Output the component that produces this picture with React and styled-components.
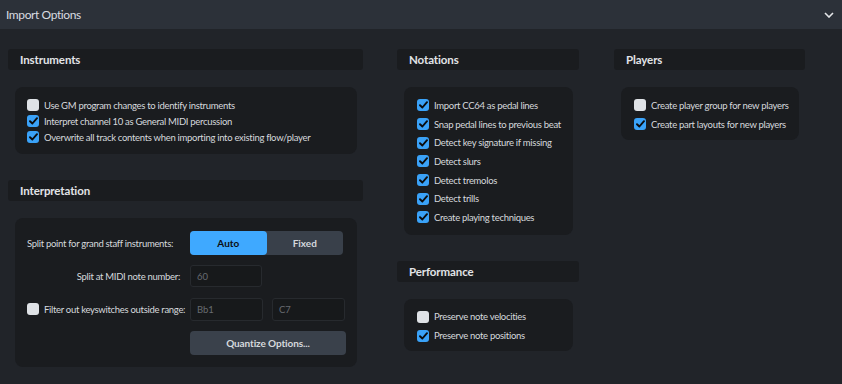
import React from "react";
import styled, { createGlobalStyle } from "styled-components";

const GlobalStyle = createGlobalStyle`
  body {
    margin: 0;
    background: #212429;
    font-family: Lato, "Open Sans", sans-serif;
    color: #d4d7db;
  }
`

const instruments = [
  { label: "Use GM program changes to identify instruments", checked: false },
  { label: "Interpret channel 10 as General MIDI percussion", checked: true },
  { label: "Overwrite all track contents when importing into existing flow/player", checked: true },
]

const notations = [
  "Import CC64 as pedal lines",
  "Snap pedal lines to previous beat",
  "Detect key signature if missing",
  "Detect slurs",
  "Detect tremolos",
  "Detect trills",
  "Create playing techniques",
].map(label => ({ label, checked: true }))

const performance = [
  { label: "Preserve note velocities", checked: false },
  { label: "Preserve note positions", checked: true },
]

const players = [
  { label: "Create player group for new players", checked: false },
  { label: "Create part layouts for new players", checked: true },
]

function Check({ checked }) {
  return (
    <Box checked={checked}>
      {checked && (
        <svg width="9" height="8" viewBox="0 0 9 8">
          <path d="M1 4.2 L3.4 6.5 L8 1.2" fill="none" stroke="#0b0c0e" strokeWidth="1.9" strokeLinecap="round" strokeLinejoin="round" />
        </svg>
      )}
    </Box>
  )
}

function CheckList({ items, rowHeight }) {
  return items.map((item, id) => (
    <CheckRow key={id} rowHeight={rowHeight}>
      <Check checked={item.checked} />
      <span>{item.label}</span>
    </CheckRow>
  ))
}

export default function App() {
  return (
    <>
      <GlobalStyle />
      <TitleBar>
        <span>Import Options</span>
        <svg width="10" height="6" viewBox="0 0 10 6">
          <path d="M1 1 L5 5 L9 1" fill="none" stroke="#e4e6e9" strokeWidth="1.6" />
        </svg>
      </TitleBar>
      <Content>
        <Column width={355}>
          <Section>
            <SectionHeader>Instruments</SectionHeader>
            <Panel padding="10px 12px 9px">
              <CheckList items={instruments} rowHeight={16} />
            </Panel>
          </Section>
          <Section>
            <SectionHeader>Interpretation</SectionHeader>
            <Panel padding="13px 11px 12px 12px">
              <FormGrid>
                <Label>Split point for grand staff instruments:</Label>
                <Segmented>
                  <Segment active>Auto</Segment>
                  <Segment>Fixed</Segment>
                </Segmented>

                <Label align="right">Split at MIDI note number:</Label>
                <InputRow>
                  <Field width={72} height={22}>60</Field>
                </InputRow>

                <Label>
                  <Check checked={false} />
                  <span>Filter out keyswitches outside range:</span>
                </Label>
                <InputRow>
                  <Field width={73} height={23}>Bb1</Field>
                  <Field width={73} height={23}>C7</Field>
                </InputRow>

                <span />
                <Button>Quantize Options...</Button>
              </FormGrid>
            </Panel>
          </Section>
        </Column>

        <Column width={182} gap={34}>
          <Section>
            <SectionHeader>Notations</SectionHeader>
            <Panel padding="9px 12px 8px 13px">
              <CheckList items={notations} rowHeight={18.7} />
            </Panel>
          </Section>
          <Section>
            <SectionHeader>Performance</SectionHeader>
            <Panel padding="8.5px 12px 6px 13px">
              <CheckList items={performance} rowHeight={19} />
            </Panel>
          </Section>
        </Column>

        <Column width={191} gap={35}>
          <Section>
            <SectionHeader>Players</SectionHeader>
            <Panel padding="8.5px 12px 6px 13px">
              <CheckList items={players} rowHeight={19} />
            </Panel>
          </Section>
        </Column>
      </Content>
    </>
  )
}

const TitleBar = styled.div`
  height: 29px;
  background: #2c3139;
  display: flex;
  align-items: center;
  justify-content: space-between;
  padding: 0 8px 0 6px;
  font-size: 12px;
  letter-spacing: -0.4px;
  color: #d9dce0;
`

const Content = styled.div`
  display: flex;
  align-items: flex-start;
  padding: 20px 0 0 8px;
`

const Column = styled.div`
  width: ${props => props.width}px;
  margin-left: ${props => props.gap || 0}px;
  display: flex;
  flex-direction: column;
  gap: 26px;
`

const Section = styled.div`
  display: flex;
  flex-direction: column;
`

const SectionHeader = styled.div`
  height: 21px;
  background: #1a1c1f;
  border-radius: 3px;
  padding-left: 12px;
  display: flex;
  align-items: center;
  font-size: 11.5px;
  letter-spacing: -0.1px;
  font-weight: 700;
  color: #e2e4e7;
`

const Panel = styled.div`
  margin: 17px 6px 0 7px;
  background: #1a1c1f;
  border-radius: 8px;
  padding: ${props => props.padding};
`

const CheckRow = styled.div`
  height: ${props => props.rowHeight}px;
  display: flex;
  align-items: center;
  gap: 5px;
  font-size: 9.5px;
  letter-spacing: -0.3px;
  color: #d6d9dd;
  white-space: nowrap;
`

const Box = styled.span`
  flex: none;
  width: 12px;
  height: 12px;
  border-radius: 3px;
  background: ${props => props.checked ? "#3aa2f8" : "#dfe2e6"};
  display: flex;
  align-items: center;
  justify-content: center;
`

const FormGrid = styled.div`
  display: grid;
  grid-template-columns: 163px 156px;
  grid-template-rows: 24px 22px 23px 24px;
  row-gap: 10.3px;
  align-items: center;
  font-size: 9.5px;
  letter-spacing: -0.3px;
`

const Label = styled.div`
  display: flex;
  align-items: center;
  gap: 5px;
  justify-content: ${props => props.align === "right" ? "flex-end" : "flex-start"};
  padding-right: ${props => props.align === "right" ? "10px" : "0"};
  color: #d6d9dd;
  white-space: nowrap;
`

const Segmented = styled.div`
  display: flex;
  height: 24px;
  width: 153px;
  background: #39404a;
  border-radius: 4px;
`

const Segment = styled.div`
  flex: 1;
  display: flex;
  align-items: center;
  justify-content: center;
  border-radius: 4px;
  font-weight: 700;
  font-size: 10px;
  letter-spacing: 0;
  background: ${props => props.active ? "#3fa9ff" : "transparent"};
  color: ${props => props.active ? "#0c0e11" : "#d3d7dc"};
`

const InputRow = styled.div`
  display: flex;
  gap: 9px;
`

const Field = styled.div`
  box-sizing: border-box;
  width: ${props => props.width}px;
  height: ${props => props.height}px;
  background: #17191b;
  border: 1px solid #272a2e;
  border-radius: 3px;
  display: flex;
  align-items: center;
  padding-left: 6px;
  color: #676b71;
  font-size: 9.5px;
  letter-spacing: 0;
`

const Button = styled.div`
  height: 24px;
  width: 156px;
  background: #3a414b;
  border-radius: 4px;
  display: flex;
  align-items: center;
  justify-content: center;
  font-weight: 700;
  font-size: 10px;
  letter-spacing: -0.1px;
  color: #d6d9dd;
`
